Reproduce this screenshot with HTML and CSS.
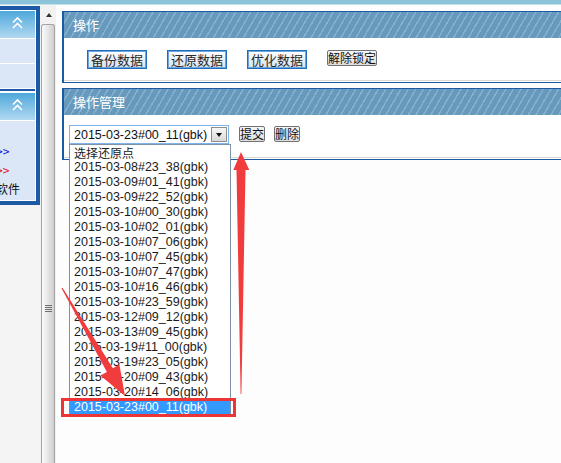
FILE: index.html
```html
<html lang="zh-CN">
<head>
  <meta charset="UTF-8" />
  <title>数据管理</title>
  <link rel="stylesheet" href="styles.css">
</head>
<body>
  <div class="topline"></div>
  <div class="frame">
    <aside class="side">
      <div class="side-box">
        <div class="side-head">
          <svg class="chev" width="11" height="13" viewBox="0 0 11 13"><path d="M1 6.5 L5.5 2 L10 6.5 M1 12 L5.5 7.5 L10 12" fill="none" stroke="#fff" stroke-width="1.6"/></svg>
        </div>
        <div class="side-row"></div>
        <div class="side-row"></div>
        <div class="side-sep"></div>
        <div class="side-head">
          <svg class="chev" width="11" height="13" viewBox="0 0 11 13"><path d="M1 6.5 L5.5 2 L10 6.5 M1 12 L5.5 7.5 L10 12" fill="none" stroke="#fff" stroke-width="1.6"/></svg>
        </div>
        <div class="side-body">
          <ul class="side-links">
            <li class="blue">升级&gt;&gt;</li>
            <li class="red">补丁&gt;&gt;</li>
            <li>清理软件</li>
          </ul>
        </div>
      </div>
    </aside>

    <div class="splitter">
      <div class="split-btn"><span class="up"></span></div>
      <div class="split-thumb"><span class="grip"></span></div>
    </div>

    <main class="main">
      <section class="panel">
        <div class="panel-head">操作</div>
        <div class="panel-body tools">
          <button class="btn-blue">备份数据</button>
          <button class="btn-blue">还原数据</button>
          <button class="btn-blue">优化数据</button>
          <button class="btn">解除锁定</button>
        </div>
      </section>

      <section class="panel second">
        <div class="panel-head">操作管理</div>
        <div class="panel-body restore">
          <div class="combo">
            <span class="combo-text">2015-03-23#00_11(gbk)</span>
            <span class="combo-arrow"></span>
            <ul class="combo-list">
              <li>选择还原点</li>
              <li>2015-03-08#23_38(gbk)</li>
              <li>2015-03-09#01_41(gbk)</li>
              <li>2015-03-09#22_52(gbk)</li>
              <li>2015-03-10#00_30(gbk)</li>
              <li>2015-03-10#02_01(gbk)</li>
              <li>2015-03-10#07_06(gbk)</li>
              <li>2015-03-10#07_45(gbk)</li>
              <li>2015-03-10#07_47(gbk)</li>
              <li>2015-03-10#16_46(gbk)</li>
              <li>2015-03-10#23_59(gbk)</li>
              <li>2015-03-12#09_12(gbk)</li>
              <li>2015-03-13#09_45(gbk)</li>
              <li>2015-03-19#11_00(gbk)</li>
              <li>2015-03-19#23_05(gbk)</li>
              <li>2015-03-20#09_43(gbk)</li>
              <li>2015-03-20#14_06(gbk)</li>
              <li class="picked">2015-03-23#00_11(gbk)</li>
            </ul>
          </div>
          <button class="btn">提交</button>
          <button class="btn">删除</button>
        </div>
      </section>
    </main>
  </div>

  <!-- red notes drawn over the open list -->
  <svg class="marks" width="561" height="463" viewBox="0 0 561 463">
    <rect x="62.5" y="399.5" width="172" height="16" fill="none" stroke="#ee3535" stroke-width="3"/>
    <polygon points="62.5,287.7 112.9,368.3 119.4,364.6 125,396 100.4,375.6 106.9,371.9 61.5,288.3" fill="#f03c3c"/>
    <polygon points="240.6,394 241.4,394 245.5,170 249.3,170 241,152 233.3,170 236.5,170" fill="#f03c3c"/>
  </svg>
</body>
</html>
```

FILE: styles.css
```css
body {
  margin: 0;
  width: 561px;
  height: 463px;
  overflow: hidden;
  position: relative;
  font-family: 'Liberation Sans', 'Noto Sans CJK SC', sans-serif;
  background: #fdfdfd;
  color: #111;
}

ul {
  margin: 0;
  padding: 0;
  list-style: none;
}

.topline {
  height: 5px;
  background: linear-gradient(#8cc3d8 0 4px, #c5e2ec 4px);
}

.frame {
  display: flex;
  height: 458px;
}

/* left menu */
.side {
  width: 40px;
  background: #f4f4f4;
}

.side-box {
  margin-top: 1px;
  border: 4px solid #1d5aa6;
  border-left: 0;
  background: #fff;
  padding: 1px 1px 1px 0;
}

.side-head {
  height: 27px;
  display: flex;
  justify-content: center;
  padding-top: 5px;
  box-sizing: border-box;
  background: linear-gradient(#4ea8db, #b2d9f2);
}

.side-row {
  height: 24px;
  margin-top: 1px;
  background: #dbe7f6;
}

.side-sep {
  height: 2px;
  margin: 1px 0 2px;
  background: #1d5aa6;
}

.side-body {
  height: 79px;
  margin-top: 1px;
  background: #dbe7f6;
  overflow: hidden;
}

.side-links {
  margin-left: -28px;
  padding-top: 20px;
  font-family: 'Noto Sans CJK SC', sans-serif;
  font-size: 12px;
  line-height: 19px;
  white-space: nowrap;
}

.side-links .blue { color: #1010e0; }
.side-links .red { color: #e01010; }

/* splitter bar */
.splitter {
  width: 16px;
  display: flex;
  flex-direction: column;
  background: #f2f2f2;
}

.split-btn {
  height: 19px;
  display: flex;
  justify-content: center;
  align-items: center;
}

.up {
  width: 0;
  height: 0;
  margin-left: 2px;
  border-left: 3px solid transparent;
  border-right: 3px solid transparent;
  border-bottom: 4px solid #333;
}

.split-thumb {
  flex: 1;
  width: 14px;
  margin-left: 1px;
  box-sizing: border-box;
  border: 1px solid #a3a3a3;
  border-bottom: 0;
  border-radius: 3px 3px 0 0;
  background: linear-gradient(90deg, #fafafa, #e8e8e8 45%, #cfcfcf);
}

.grip {
  display: block;
  width: 7px;
  height: 8px;
  margin: 280px auto 0;
  background: repeating-linear-gradient(#707070 0 1px, transparent 1px 2px);
}

/* content */
.main {
  flex: 1;
  padding: 6px 0 0 6px;
  overflow: hidden;
}

.panel {
  margin-right: -10px;
  border: 1px solid #1d5aa6;
  border-left-width: 2px;
  padding-bottom: 1px;
  background: #fff;
}

.panel.second {
  margin-top: 5px;
}

.panel-head {
  height: 26px;
  line-height: 26px;
  padding-left: 9px;
  color: #fff;
  font-family: 'Noto Sans CJK SC', sans-serif;
  font-size: 13px;
  background-color: #6699bb;
  background-image: repeating-linear-gradient(120deg, transparent 0 5px, rgba(160, 200, 225, 0.5) 5px 6.5px);
}

.panel-body {
  height: 42px;
  box-sizing: content-box;
  border-bottom: 1px solid #dadada;
}

.tools {
  display: flex;
  align-items: flex-start;
  gap: 20px;
  padding-left: 23px;
  height: 30px;
  padding-top: 12px;
}

.restore {
  display: flex;
  align-items: flex-start;
  padding-left: 5px;
  height: 32px;
  padding-top: 10px;
}

button {
  margin: 0;
  font-family: 'Noto Sans CJK SC', sans-serif;
  color: #111;
  cursor: pointer;
}

.btn-blue {
  width: 60px;
  height: 19px;
  padding: 0;
  font-size: 13px;
  line-height: 17px;
  color: #2a2a2a;
  border: 1px solid #1e6ec0;
  box-shadow: inset 0 0 0 1px #6fa4dc;
  background: linear-gradient(#ffffff, #d5e1f1);
}

.btn {
  height: 16px;
  padding: 0;
  font-size: 12px;
  line-height: 14px;
  border: 1px solid #727272;
  border-radius: 2px;
  background: linear-gradient(#f6f6f6, #dedede);
}

.restore .btn {
  margin-top: 1px;
  margin-left: 9px;
}

.restore .combo + .btn {
  margin-left: 10px;
}

/* opened drop-down */
.combo {
  position: relative;
  width: 160px;
  height: 19px;
  box-sizing: border-box;
  border: 1px solid #7eb4ea;
  background: #fff;
  display: flex;
  align-items: center;
  font-size: 12.5px;
}

.combo-text {
  flex: 1;
  padding-left: 4px;
}

.combo-arrow {
  width: 16px;
  height: 15px;
  margin-right: 1px;
  box-sizing: border-box;
  border: 1px solid #8d8d8d;
  background: linear-gradient(#f7f7f7, #d9d9d9);
  display: flex;
  justify-content: center;
  align-items: center;
}

.combo-arrow::after {
  content: '';
  border-left: 3.5px solid transparent;
  border-right: 3.5px solid transparent;
  border-top: 4px solid #111;
}

.combo-list {
  position: absolute;
  top: 18px;
  left: -1px;
  width: 162px;
  box-sizing: border-box;
  border: 1px solid #7d92ab;
  background: #fff;
}

.combo-list li {
  height: 15px;
  line-height: 15px;
  padding-left: 4px;
  font-size: 12.5px;
  color: #1a1a1a;
  white-space: nowrap;
}

.combo-list li:first-child {
  font-family: 'Noto Sans CJK SC', sans-serif;
  font-size: 12px;
}

.combo-list .picked {
  background: #3399ff;
  color: #fff;
}

.marks {
  position: absolute;
  top: 0;
  left: 0;
  pointer-events: none;
}
```
